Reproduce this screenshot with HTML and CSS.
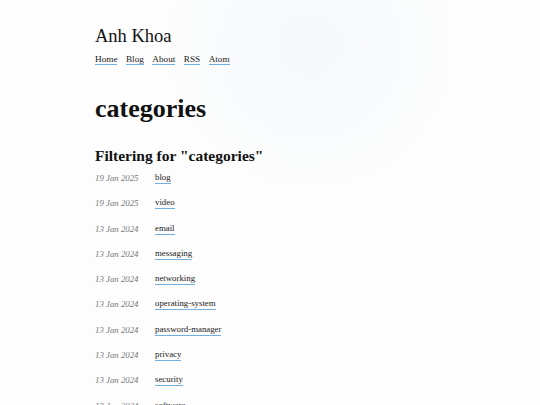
FILE: index.html
```html
<!DOCTYPE html>
<html lang="en">
<head>
    <meta charset="UTF-8">
    <meta name="viewport" content="width=device-width, initial-scale=1.0">
    <title>categories - Anh Khoa</title>
    <link rel="stylesheet" href="styles.css">
</head>
<body>
    <div class="page">
        <header class="site-header">
            <div class="site-title">Anh Khoa</div>
            <nav class="site-nav">
                <a href="/">Home</a>
                <a href="/blog">Blog</a>
                <a href="/about">About</a>
                <a href="/rss.xml">RSS</a>
                <a href="/atom.xml">Atom</a>
            </nav>
        </header>

        <main>
            <h1>categories</h1>
            <h2>Filtering for "categories"</h2>

            <!-- Posts tagged with this category -->
            <ul class="post-list">
                <li><span class="date">19 Jan 2025</span><a href="#">blog</a></li>
                <li><span class="date">19 Jan 2025</span><a href="#">video</a></li>
                <li><span class="date">13 Jan 2024</span><a href="#">email</a></li>
                <li><span class="date">13 Jan 2024</span><a href="#">messaging</a></li>
                <li><span class="date">13 Jan 2024</span><a href="#">networking</a></li>
                <li><span class="date">13 Jan 2024</span><a href="#">operating-system</a></li>
                <li><span class="date">13 Jan 2024</span><a href="#">password-manager</a></li>
                <li><span class="date">13 Jan 2024</span><a href="#">privacy</a></li>
                <li><span class="date">13 Jan 2024</span><a href="#">security</a></li>
                <li><span class="date">13 Jan 2024</span><a href="#">software</a></li>
            </ul>
        </main>
    </div>
</body>
</html>
```

FILE: styles.css
```css
body {
    margin: 0;
    font-family: "Liberation Serif", "DejaVu Serif", serif;
    color: #111;
    background:
        radial-gradient(circle at 310px 45px, rgba(232, 240, 246, 0.35) 0, rgba(236, 243, 248, 0.2) 100px, rgba(253, 253, 253, 0) 150px),
        #fdfdfd;
    min-height: 405px;
}
.page {
    padding: 24px 95px 0;
}
.site-title {
    font-size: 18.5px;
    line-height: 24px;
    color: #111;
}
.site-nav {
    display: flex;
    gap: 8.5px;
    margin-top: 6px;
    font-size: 9.2px;
}
a {
    color: #1a1a1a;
    text-decoration: none;
    border-bottom: 1.5px solid #6fb0de;
}
h1 {
    font-size: 26px;
    line-height: 30px;
    margin: 29px 0 0;
    font-weight: bold;
}
h2 {
    font-size: 15.5px;
    line-height: 20px;
    margin: 22px 0 0;
    font-weight: bold;
}
.post-list {
    list-style: none;
    margin: 5px 0 0;
    padding: 0;
}
.post-list li {
    display: flex;
    height: 25.3px;
    font-size: 8.8px;
    line-height: 14px;
}
.date {
    width: 60px;
    color: #777;
    font-style: italic;
}
.post-list a {
    align-self: flex-start;
    line-height: 12px;
}
```
